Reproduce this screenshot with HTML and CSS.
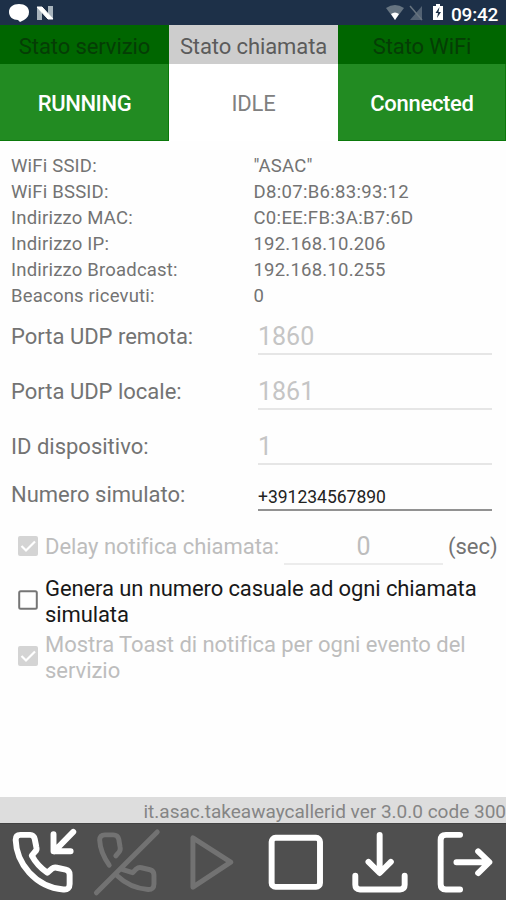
FILE: index.html
```html
<!DOCTYPE html>
<html lang="it">
<head>
<meta charset="utf-8">
<title>Caller ID</title>
<link rel="stylesheet" href="styles.css">
</head>
<body>
<header class="statusbar">
  <svg class="notes" viewBox="0 0 60 25"><path d="M19 4c6 0 10 3 10 8 0 4-2 6-5 8l-4 2-2-2c-5 0-9-3-9-8 0-5 4-8 10-8z" fill="#fff"/><path d="M37 7h5v13h-5zM48 6h5v13h-5z" fill="#a8b4bd"/><path d="M37 7h5l11 12h-5z" fill="#fff" stroke="#fff"/></svg>
  <svg class="signals" viewBox="0 0 64 25"><path d="M3 8q9-6 18 0l-9 12z" fill="#667481"/><path d="M8 14q4-3 8 0l-4 6z" fill="#fff"/><path d="M39 6v14H27z" fill="#536273"/><path d="M27 6l12 14" stroke="#68747f" stroke-width="1.5"/><path d="M53 4h4v2h3v14H50V6h3z" fill="#fff"/><path d="M56.500 7l-4 6h2.500l-1 5 4-6h-2.500z" fill="#1d3048"/></svg>
  <span class="clock">09:42</span>
</header>
<section class="states">
  <div class="state on"><div class="state-title">Stato servizio</div><div class="state-value"><span class="running">RUNNING</span></div></div>
  <div class="state"><div class="state-title">Stato chiamata</div><div class="state-value">IDLE</div></div>
  <div class="state on"><div class="state-title wifi">Stato WiFi</div><div class="state-value">Connected</div></div>
</section>
<main>
  <dl class="info">
    <dt>WiFi SSID:</dt><dd>"ASAC"</dd>
    <dt>WiFi BSSID:</dt><dd>D8:07:B6:83:93:12</dd>
    <dt>Indirizzo MAC:</dt><dd>C0:EE:FB:3A:B7:6D</dd>
    <dt>Indirizzo IP:</dt><dd>192.168.10.206</dd>
    <dt>Indirizzo Broadcast:</dt><dd>192.168.10.255</dd>
    <dt>Beacons ricevuti:</dt><dd>0</dd>
  </dl>
  <div class="field"><span>Porta UDP remota:</span><div class="entry">1860</div></div>
  <div class="field"><span>Porta UDP locale:</span><div class="entry">1861</div></div>
  <div class="field"><span>ID dispositivo:</span><div class="entry">1</div></div>
  <div class="field number"><span>Numero simulato:</span><div class="entry">+391234567890</div></div>
  <div class="option off delay">
    <svg class="check" viewBox="0 0 20 20"><rect width="20" height="20" rx="2" fill="#d4d4d4"/><path d="M3.500 10l4.500 4.500L17 5.500" fill="none" stroke="#fff" stroke-width="2.200"/></svg>
    <span>Delay notifica chiamata:</span><div class="seconds">0</div><span class="unit">(sec)</span>
  </div>
  <div class="option">
    <svg class="check" viewBox="0 0 20 20"><rect x="1.200" y="1.200" width="17.600" height="17.600" rx="1.500" fill="none" stroke="#757575" stroke-width="2"/></svg>
    <span>Genera un numero casuale ad ogni chiamata<br>simulata</span>
  </div>
  <div class="option off toast">
    <svg class="check" viewBox="0 0 20 20"><rect width="20" height="20" rx="2" fill="#d4d4d4"/><path d="M3.500 10l4.500 4.500L17 5.500" fill="none" stroke="#fff" stroke-width="2.200"/></svg>
    <span>Mostra Toast di notifica per ogni evento del<br>servizio</span>
  </div>
</main>
<div class="version">it.asac.takeawaycallerid ver 3.0.0 code 300</div>
<nav class="toolbar">
  <svg viewBox="0 99 253 231"><path d="M60 132H90Q101 132 104 145L109 170Q111 178 105 183L95 195Q111 225 142 247L156 235Q162 230 171 232L198 238Q210 241 210 253V281Q210 300 191 298C105 290 48 218 46 147Q46 132 60 132M221 123L163 182M161 130V182H213"/></svg>
  <svg class="disabled" viewBox="253 99 253 231"><path d="M328 224C309 197 300 170 299 148Q299 132 315 132H340Q354 132 357 145L361 169Q363 178 358 184L348 196M367 237L399 247L410 236Q417 230 426 232L452 238Q464 241 464 254V281Q464 299 446 298C409 295 377 280 353 257M289 308L474 123"/></svg>
  <svg class="disabled" viewBox="506 99 253 231"><path d="M577 141V291L692 215Z"/></svg>
  <svg viewBox="0 99 253 231"><rect x="55" y="141" width="147" height="149" rx="12"/></svg>
  <svg viewBox="253 99 253 231"><path d="M381 132V247M347 214L381 248L415 214M307 256V284Q307 298 321 298H443Q457 298 457 284V256"/></svg>
  <svg viewBox="506 99 253 231"><path d="M620 132H577Q561 132 561 148V282Q561 298 577 298H620M609 215H708M675 182L709 215L675 248"/></svg>
</nav>
</body>
</html>
```

FILE: styles.css
```css
* { box-sizing: border-box; }
body { margin: 0; width: 506px; height: 900px; overflow: hidden; display: flex; flex-direction: column; background: #fefefe; color: #737373; font: 22px/26px Roboto, sans-serif; }
span, dt, dd, .version { white-space: nowrap; }
.statusbar { height: 25px; flex: none; background: #1d3048; display: flex; align-items: center; }
.notes { width: 60px; height: 25px; }
.signals { width: 64px; height: 25px; margin-left: auto; }
.clock { color: #fff; font-size: 19px; font-weight: 500; letter-spacing: -.2px; width: 55px; margin-top: 4px; margin-left: 4px; }
.states { display: grid; grid-template-columns: 169px 169px 168px; height: 116px; flex: none; text-align: center; }
.state { background: #fff; }
.state.on { background: #228b22; box-shadow: inset -1px -1px #0b790b; }
.state-title { height: 39px; line-height: 43px; background: #cdcdcd; color: #5b5b5b; letter-spacing: -.1px; }
.on .state-title { background: #006600; color: #053d05; }
.state-value { height: 77px; line-height: 79px; color: #808080; letter-spacing: -.2px; }
.on .state-value { color: #fff; font-weight: 500; letter-spacing: -.3px; }
.running { letter-spacing: -.4px; }
main { flex: 1; }
.info { margin: 0; padding: 12px 11px 0; display: grid; grid-template-columns: 242.5px 1fr; grid-auto-rows: 26px; font-size: 18.5px; letter-spacing: .2px; }
dd { margin: 0; letter-spacing: .22px; }
dd:nth-of-type(2), dd:nth-of-type(3) { letter-spacing: .32px; }
.field { height: 55px; padding: 0 14px 0 11px; display: grid; grid-template-columns: 247px 1fr; align-items: center; }
.entry { height: 36px; border-bottom: 2px solid #e6e6e6; font-size: 25px; line-height: 36px; color: #c5c5c5; }
.number { height: 42px; }
.number .entry { height: 31px; line-height: 34px; font-size: 17.5px; color: #222; border-color: #929292; }
.option { display: flex; align-items: center; padding-left: 18px; height: 56px; color: #181818; letter-spacing: -.1px; }
.option > span { padding-top: 4px; }
.check { width: 20px; height: 20px; margin-right: 7px; flex: none; }
.off { color: #bdbdbd; letter-spacing: -.04px; }
.delay { padding-top: 4px; }
.delay > span { padding-top: 2px; }
.seconds { width: 159px; height: 38px; margin-left: 5px; border-bottom: 2px solid #ececec; text-align: center; font-size: 25px; line-height: 40px; }
.delay .unit { color: #737373; margin-left: 5px; }
.version { height: 26px; flex: none; background: #ddd; color: #858585; font-size: 19px; line-height: 29px; text-align: right; }
.toolbar { height: 77px; flex: none; background: #4f4f4f; display: grid; grid-template-columns: repeat(6, 1fr); border-top: 1px solid #424242; }
.toolbar svg { width: 100%; height: 76px; fill: none; stroke: #fff; stroke-width: 18; stroke-linecap: round; stroke-linejoin: round; }
.toolbar .disabled { stroke: #727272; stroke-width: 15; }
```
